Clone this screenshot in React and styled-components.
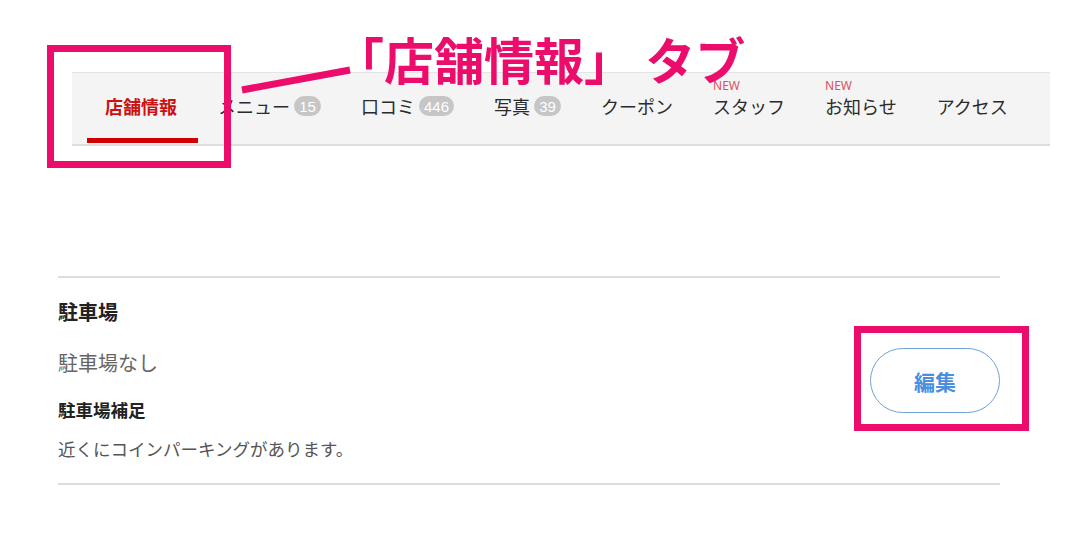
import React from 'react';
import styled, { createGlobalStyle, css } from 'styled-components';

const GlobalStyle = createGlobalStyle`
  html, body { margin: 0; padding: 0; background: #fff; }
  body { font-family: "Noto Sans CJK JP", "Noto Sans", sans-serif; color: #333; }
  * { box-sizing: border-box; }
`;

const PINK = '#ec0c6c';

const Page = styled.div`
  position: relative;
  width: 1092px;
  height: 541px;
  overflow: hidden;
  padding-top: 72px;
`;

const TabBar = styled.nav`
  margin-left: 72px;
  width: 978px;
  height: 74px;
  display: flex;
  align-items: stretch;
  padding-left: 14px;
  background: #f4f4f4;
  border-top: 1px solid #e4e4e4;
  border-bottom: 2px solid #dedede;
`;

const Tab = styled.div`
  position: relative;
  display: flex;
  align-items: center;
  padding: ${p => (p.$active ? '0 21px 5px 19px' : '0 20px 5px')};
  font-size: 18px;
  line-height: 18px;
  white-space: nowrap;
  font-weight: ${p => (p.$active ? 700 : 400)};
  color: ${p => (p.$active ? '#cc1111' : '#2b2b2b')};
  ${p =>
    p.$active &&
    css`
      &::after {
        content: '';
        position: absolute;
        left: 1px;
        right: 0;
        bottom: 1px;
        height: 5px;
        background: #d10000;
      }
    `}
`;

const Label = styled.span`
  position: relative;
`;

const NewMark = styled.span`
  position: absolute;
  left: 0;
  top: -17px;
  font-family: "Noto Sans", "Liberation Sans", sans-serif;
  font-size: 12px;
  line-height: 12px;
  font-weight: 400;
  color: #e2505e;
`;

const Badge = styled.span`
  display: inline-flex;
  align-items: center;
  justify-content: center;
  height: 20px;
  min-width: 27px;
  padding: 0 5px;
  margin-left: 4px;
  border-radius: 10px;
  background: #c6c6c6;
  color: #fff;
  font-family: "Liberation Sans", Arial, sans-serif;
  font-size: 15px;
  line-height: 1;
`;

const Frame = styled.div`
  position: absolute;
  top: ${p => p.$top}px;
  left: ${p => p.$left}px;
  width: ${p => p.$w}px;
  height: ${p => p.$h}px;
  border: 7px solid ${PINK};
  pointer-events: none;
  z-index: 2;
`;

const Callout = styled.div`
  position: absolute;
  left: 334px;
  top: 33px;
  font-size: 50px;
  line-height: 1;
  font-weight: 700;
  color: ${PINK};
  white-space: nowrap;
  z-index: 3;
`;

const Leader = styled.svg`
  position: absolute;
  left: 238px;
  top: 62px;
  z-index: 3;
`;

const Section = styled.section`
  margin: 130px 0 0 58px;
  width: 942px;
  border-top: 2px solid #dddddd;
  border-bottom: 2px solid #dddddd;
  display: flex;
  align-items: center;
  justify-content: space-between;
`;

const Info = styled.div`
  padding: 20px 0 21px;
  display: flex;
  flex-direction: column;
`;

const Heading = styled.h3`
  margin: 0;
  font-size: ${p => p.$size}px;
  line-height: ${p => p.$lh}px;
  font-weight: 700;
  color: #222;
  margin-top: ${p => p.$mt || 0}px;
`;

const Value = styled.p`
  margin: 0;
  font-size: ${p => p.$size}px;
  line-height: ${p => p.$lh}px;
  font-weight: 400;
  color: ${p => p.$color};
  margin-top: ${p => p.$mt || 0}px;
`;

const ButtonWrap = styled.div`
  position: relative;
`;

const EditButton = styled.button`
  width: 130px;
  height: 65px;
  border-radius: 33px;
  border: 1px solid #6fa2da;
  background: #fff;
  color: #4a8ee0;
  font-family: "Noto Sans CJK JP", sans-serif;
  font-size: 21px;
  font-weight: 700;
  cursor: pointer;
  padding: 0;
`;

const tabs = [
  { label: '店舗情報', active: true },
  { label: 'メニュー', badge: '15' },
  { label: '口コミ', badge: '446' },
  { label: '写真', badge: '39' },
  { label: 'クーポン' },
  { label: 'スタッフ', isNew: true },
  { label: 'お知らせ', isNew: true },
  { label: 'アクセス' },
];

export default function App() {
  return (
    <>
      <GlobalStyle />
      <Page>
        <Callout>「店舗情報」 タブ</Callout>
        <Leader width="118" height="34" viewBox="0 0 118 34">
          <line x1="4" y1="28" x2="112" y2="8" stroke={PINK} strokeWidth="7" />
        </Leader>
        <TabBar>
          {tabs.map(t => (
            <Tab key={t.label} $active={t.active}>
              {t.active && <Frame $top={-28} $left={-39} $w={184} $h={123} />}
              <Label>
                {t.isNew && <NewMark>NEW</NewMark>}
                {t.label}
              </Label>
              {t.badge && <Badge>{t.badge}</Badge>}
            </Tab>
          ))}
        </TabBar>
        <Section>
          <Info>
            <Heading $size={20} $lh={28}>駐車場</Heading>
            <Value $size={20} $lh={28} $mt={23} $color="#666">駐車場なし</Value>
            <Heading $size={17.5} $lh={26} $mt={20}>駐車場補足</Heading>
            <Value $size={17.5} $lh={26} $mt={13} $color="#555">近くにコインパーキングがあります。</Value>
          </Info>
          <ButtonWrap>
            <Frame $top={-22} $left={-16} $w={175} $h={105} />
            <EditButton>編集</EditButton>
          </ButtonWrap>
        </Section>
      </Page>
    </>
  );
}
